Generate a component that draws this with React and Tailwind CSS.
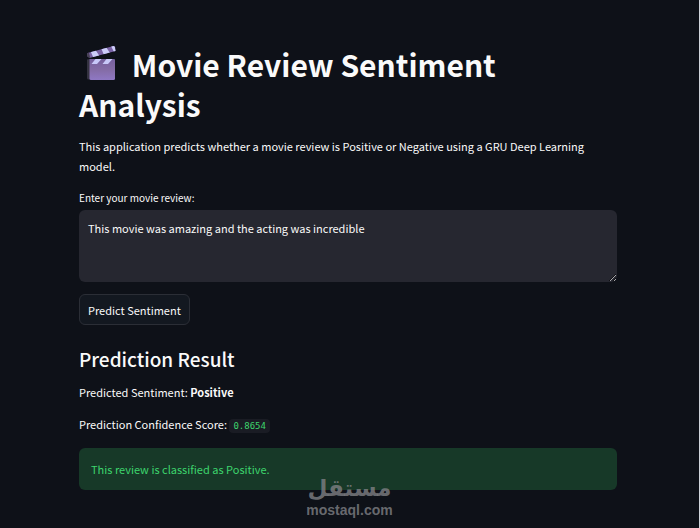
import React, { useState } from 'react';

const ClapperIcon = () => (
  <svg viewBox="0 0 36 36" className="w-9 h-9 shrink-0" aria-hidden="true">
    <defs>
      <linearGradient id="board" x1="0" y1="0" x2="0" y2="1">
        <stop offset="0" stopColor="#76609e" />
        <stop offset="0.5" stopColor="#846ca5" />
        <stop offset="1" stopColor="#8f78c4" />
      </linearGradient>
      <clipPath id="arm">
        <path d="M2.500 8 L27.500 1.200 Q29.500 0.800 30 2.500 L30.500 6 L4.500 13 L2 11 Z" />
      </clipPath>
      <clipPath id="strip">
        <rect x="4" y="14" width="26" height="5" />
      </clipPath>
    </defs>
    <path d="M2 14.500 L5 14 V34.500 H3.500 Q2 34.500 2 33 Z" fill="#343340" />
    <path d="M4.500 14 H29 Q30 14 30 15 V33.500 Q30 35 28.500 35 H6 Q4.500 35 4.500 33.500 Z" fill="url(#board)" />
    <g clipPath="url(#arm)">
      <rect width="36" height="16" fill="#7962a4" />
      <path d="M5.500 6 L10.500 5 L14.500 11 L8.500 13 Z M16 3 L21 2 L25 8 L19 10 Z M25.500 0 L30 0 L33 6 L29 7 Z" fill="#cdcdfa" />
      <path d="M1 8 L4 8 L5.500 14 L1 14 Z" fill="#464052" />
    </g>
    <g clipPath="url(#strip)" fill="#c8c8f8">
      <path d="M10.500 14 H16.500 L12 19 H6.500 Z M21.500 14 H27.500 L23 19 H17.500 Z" />
    </g>
  </svg>
);

const Watermark = () => (
  <div className="absolute bottom-2.5 left-1/2 -translate-x-1/2 flex flex-col items-center text-[#808186]/80 font-bold pointer-events-none">
    <span lang="ar" dir="rtl" className="font-['DejaVu_Sans',sans-serif] text-[23px] leading-7">مستقل</span>
    <span className="font-['Liberation_Sans',sans-serif] text-sm leading-4">mostaql.com</span>
  </div>
);

const App = () => {
  const [review, setReview] = useState('This movie was amazing and the acting was incredible');
  const [result] = useState({ sentiment: 'Positive', score: 0.8654 });

  return (
    <div className="relative min-h-screen bg-[#0e1118] border-r border-gray-300 text-[#fafafa] text-[11px] leading-5 font-['Noto_Sans_CJK_SC',sans-serif]">
      <main className="pl-[79px] pr-[82px] pt-11 pb-9">
        <h1 className="text-[30px] leading-10 font-bold">
          <span className="inline-flex h-6 items-end align-middle pl-1.5 pr-1"><ClapperIcon /></span>{' '}
          Movie Review Sentiment Analysis
        </h1>

        <p className="mt-3">
          This application predicts whether a movie review is Positive or Negative using a GRU Deep Learning model.
        </p>

        <form className="mt-3" onSubmit={(e) => e.preventDefault()}>
          <label htmlFor="review" className="block text-[10px] leading-5">Enter your movie review:</label>
          <textarea
            id="review"
            value={review}
            onChange={(e) => setReview(e.target.value)}
            className="block w-full h-[72px] mt-0.5 px-[9px] py-2 rounded-md bg-[#262730] resize-y focus:outline-none"
          />
          <button
            type="submit"
            className="mt-3 h-[31px] px-2 rounded-md border border-[#2b2e36] bg-[#131820] hover:border-[#fafafa]"
          >
            Predict Sentiment
          </button>
        </form>

        <section>
          <h2 className="mt-5 text-[19px] leading-7 font-medium">Prediction Result</h2>
          <p className="mt-[9px]">
            Predicted Sentiment: <strong>{result.sentiment}</strong>
          </p>
          <p className="mt-3">
            Prediction Confidence Score:{' '}
            <code className="px-1 py-0.5 rounded bg-[#1a1c24] text-[#3dd56d] text-[9px] font-['DejaVu_Sans_Mono',monospace]">
              {result.score}
            </code>
          </p>
          <div role="alert" className="mt-3 px-3 py-[11px] rounded-md bg-[#173928] text-[#3dd56d]">
            This review is classified as {result.sentiment}.
          </div>
        </section>
      </main>
      <Watermark />
    </div>
  );
};

export default App;
